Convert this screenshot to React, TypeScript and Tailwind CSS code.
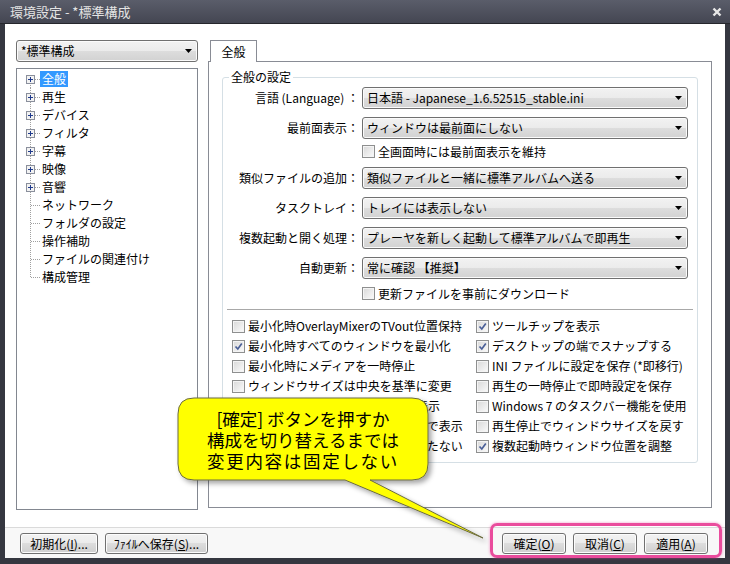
import React from 'react'

const tree = [
  { t: '全般', plus: true, sel: true },
  { t: '再生', plus: true },
  { t: 'デバイス', plus: true },
  { t: 'フィルタ', plus: true },
  { t: '字幕', plus: true },
  { t: '映像', plus: true },
  { t: '音響', plus: true },
  { t: 'ネットワーク' },
  { t: 'フォルダの設定' },
  { t: '操作補助' },
  { t: 'ファイルの関連付け' },
  { t: '構成管理' },
]

const options: Array<[string, boolean, string, boolean]> = [
  ['最小化時OverlayMixerのTVout位置保持', false, 'ツールチップを表示', true],
  ['最小化時すべてのウィンドウを最小化', true, 'デスクトップの端でスナップする', true],
  ['最小化時にメディアを一時停止', false, 'INI ファイルに設定を保存 (*即移行)', false],
  ['ウィンドウサイズは中央を基準に変更', false, '再生の一時停止で即時設定を保存', false],
  ['全画面時にファイル名を上部に表示', false, 'Windows 7 のタスクバー機能を使用', false],
  ['再生中のファイル名をタスクバーで表示', false, '再生停止でウィンドウサイズを戻す', false],
  ['タスクバーにアイコンボタンを持たない', false, '複数起動時ウィンドウ位置を調整', true],
]

function Combo({ text, className = '' }: { text: string; className?: string }) {
  return (
    <div className={`h-[22px] flex items-center justify-between rounded-[3px] border border-[#707070] bg-[linear-gradient(#f2f2f2,#ebebeb_50%,#dddddd_50%,#d2d2d2)] shadow-[inset_0_0_0_1px_#fbfbfb] pl-[4px] pr-[5px] ${className}`}>
      <span className="leading-[16px] whitespace-nowrap">{text}</span>
      <svg width="7" height="4" className="shrink-0">
        <path d="M0 0h7L3.5 4z" fill="#000" />
      </svg>
    </div>
  )
}

function Check({ checked = false }: { checked?: boolean }) {
  return (
    <span className="w-[13px] h-[13px] shrink-0 flex items-center justify-center border border-[#8e8f8f] bg-[linear-gradient(135deg,#d8d8d8,#fbfbfb)] shadow-[inset_0_0_0_1px_#f4f4f4]">
      {checked && (
        <svg width="9" height="9">
          <path d="M1.5 4.5 L3.8 7 L7.8 1.5" fill="none" stroke="#4a5f97" strokeWidth="1.7" />
        </svg>
      )}
    </span>
  )
}

function Button({ children, className = '' }: { children: React.ReactNode; className?: string }) {
  return (
    <div className={`h-[21px] flex items-center justify-center rounded-[3px] border border-[#707070] bg-[linear-gradient(#f2f2f2,#ebebeb_50%,#dddddd_50%,#cfcfcf)] shadow-[inset_0_0_0_1px_#fcfcfc] leading-[16px] ${className}`}>
      {children}
    </div>
  )
}

function SettingRow({ label, value }: { label: string; value: string }) {
  return (
    <div className="flex items-center gap-[3px]">
      <span className="w-[136px] text-right leading-[16px] whitespace-nowrap">{label}</span>
      <Combo text={value} className="w-[326px]" />
    </div>
  )
}

export default function App() {
  return (
    <div className="relative w-[730px] h-[564px] bg-[#353740] font-['Noto_Sans_CJK_JP',sans-serif] text-[12px] text-black overflow-hidden">
      {/* Title bar */}
      <div className="h-[24px] flex items-center justify-between pl-[10px] pr-[8px] bg-[linear-gradient(#5a5d6a,#444652)] border-b border-[#25262c]">
        <span className="text-[13px] leading-[16px] text-[#e4e4e4]">環境設定 - *標準構成</span>
        <svg width="10" height="10">
          <path d="M1.5 1.5 L8.5 8.5 M8.5 1.5 L1.5 8.5" stroke="#e8e8e8" strokeWidth="2.4" />
        </svg>
      </div>

      {/* Client */}
      <div className="mx-[5px] h-[534px] bg-white flex flex-col">
        <div className="flex h-[503px] pl-[11px] pr-[13px] pt-[16px] gap-[10px]">
          {/* Left column */}
          <div className="w-[182px] flex flex-col gap-[6px]">
            <Combo text="*標準構成" className="pl-[3px] pr-[4px]" />
            <div className="h-[442px] border border-[#828790] pt-[1px]">
              {tree.map((n, i) => {
                const first = i === 0
                const last = i === tree.length - 1
                return (
                  <div key={n.t} className="flex items-center h-[18px]">
                    <svg width="23" height="18" className="shrink-0" shapeRendering="crispEdges">
                      <line x1="13.5" x2="13.5" y1={first ? 9 : 0} y2={last ? 10 : 18} stroke="#a0a0a0" strokeDasharray="1 1" />
                      <line x1={n.plus ? 18 : 14} x2="23" y1="9.5" y2="9.5" stroke="#a0a0a0" strokeDasharray="1 1" />
                      {n.plus && (
                        <>
                          <rect x="9.5" y="5.5" width="8" height="8" fill="#f2f2f2" stroke="#8a8f9c" />
                          <path d="M11 9.5h5M13.5 7v5" stroke="#1f3a8c" />
                        </>
                      )}
                    </svg>
                    <span className={`h-[16px] leading-[16px] px-[2px] whitespace-nowrap ${n.sel ? 'bg-[#3399ff] text-white' : ''}`}>
                      {n.t}
                    </span>
                  </div>
                )
              })}
            </div>
          </div>

          {/* Right column */}
          <div className="w-[504px] flex flex-col">
            <div className="flex pl-[2px]">
              <div className="relative z-10 -mb-px h-[22px] w-[47px] border border-b-0 border-[#898c95] bg-white flex items-center justify-center leading-[16px]">
                全般
              </div>
            </div>
            <div className="h-[447px] border border-[#898c95] pl-[13px] pt-[7px]">
              <fieldset className="w-[476px] h-[394px] border border-[#d5dfe5] rounded-[3px]">
                <legend className="ml-[6px] px-[2px] leading-[16px]">全般の設定</legend>
                <div className="flex flex-col pt-[2px]">
                  <SettingRow label="言語 (Language) ：" value="日本語 - Japanese_1.6.52515_stable.ini" />
                  <div className="mt-[8px]">
                    <SettingRow label="最前面表示：" value="ウィンドウは最前面にしない" />
                  </div>
                  <div className="mt-[6px] ml-[139px] h-[13px] flex items-center gap-[3px]">
                    <Check />
                    <span className="leading-[16px]">全画面時には最前面表示を維持</span>
                  </div>
                  <div className="mt-[9px] flex flex-col gap-[8px]">
                    <SettingRow label="類似ファイルの追加：" value="類似ファイルと一緒に標準アルバムへ送る" />
                    <SettingRow label="タスクトレイ：" value="トレイには表示しない" />
                    <SettingRow label="複数起動と開く処理：" value="プレーヤを新しく起動して標準アルバムで即再生" />
                    <SettingRow label="自動更新：" value="常に確認 【推奨】" />
                  </div>
                  <div className="mt-[8px] ml-[139px] h-[13px] flex items-center gap-[3px]">
                    <Check />
                    <span className="leading-[16px]">更新ファイルを事前にダウンロード</span>
                  </div>
                  <div className="mt-[9px] mx-[4px] h-px bg-[#a8a8a8]" />
                  <div className="mt-[6px] pl-[9px] grid grid-cols-[244px_1fr]">
                    {options.map(([l, lc, r, rc]) => (
                      <React.Fragment key={l}>
                        <div className="h-[20px] flex items-center gap-[3px] whitespace-nowrap">
                          <Check checked={lc} />
                          <span className="leading-[16px]">{l}</span>
                        </div>
                        <div className="h-[20px] flex items-center gap-[3px] whitespace-nowrap">
                          <Check checked={rc} />
                          <span className="leading-[16px]">{r}</span>
                        </div>
                      </React.Fragment>
                    ))}
                  </div>
                </div>
              </fieldset>
            </div>
          </div>
        </div>

        {/* Bottom buttons */}
        <div className="h-[31px] border-t border-[#dadada] bg-[#f8f8f8] flex justify-between pt-[5px] pl-[15px] pr-[17px]">
          <div className="flex gap-[7px]">
            <Button className="w-[78px]">初期化(<u>I</u>)...</Button>
            <Button className="w-[103px]">ﾌｧｲﾙへ保存(<u>S</u>)...</Button>
          </div>
          <div className="flex gap-[7px]">
            <Button className="w-[64px]">確定(<u>O</u>)</Button>
            <Button className="w-[64px]">取消(<u>C</u>)</Button>
            <Button className="w-[64px]">適用(<u>A</u>)</Button>
          </div>
        </div>
      </div>

      {/* Pink highlight round the confirm buttons */}
      <div className="absolute left-[490px] top-[523px] w-[232px] h-[35px] rounded-[7px] border-[3px] border-[#ea4c9d] shadow-[0_0_3px_rgba(234,76,157,0.6)]" />

      {/* Callout */}
      <svg className="absolute left-0 top-0 pointer-events-none" width="730" height="564">
        <defs>
          <filter id="sh" x="-20%" y="-20%" width="140%" height="140%">
            <feDropShadow dx="3" dy="3" stdDeviation="2.5" floodColor="#000" floodOpacity="0.35" />
          </filter>
        </defs>
        <path
          d="M194 398 H412 Q428 398 428 414 V464 Q428 480 412 480 H370 L483 538 L345 480 H194 Q178 480 178 464 V414 Q178 398 194 398 Z"
          fill="#ffff00"
          stroke="#6b6b40"
          strokeWidth="1"
          filter="url(#sh)"
        />
      </svg>
      <div className="absolute left-[178px] top-[398px] w-[250px] h-[82px] flex flex-col items-center justify-center text-[17.5px] leading-[21px] whitespace-nowrap">
        <span>[確定] ボタンを押すか</span>
        <span>構成を切り替えるまでは</span>
        <span className="tracking-[1.7px]">変更内容は固定しない</span>
      </div>
    </div>
  )
}
